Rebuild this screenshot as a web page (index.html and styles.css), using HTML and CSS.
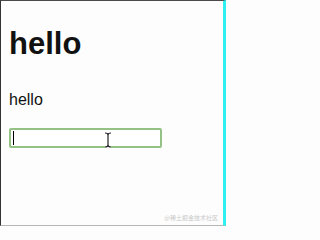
FILE: index.html
```html
<!DOCTYPE html>
<html>
<head>
<meta charset="utf-8">
<link rel="stylesheet" href="styles.css">
</head>
<body>
<div class="frame">
  <h1 class="title">hello</h1>
  <p class="text">hello</p>
  <div class="field">
    <input class="input" type="text">
    <span class="caret"></span>
    <svg class="ibeam" width="8" height="16" viewBox="0 0 8 16">
      <path d="M1 1 Q4 1 4 3 Q4 1 7 1 M4 3 V13 M1 15 Q4 15 4 13 Q4 15 7 15" fill="none" stroke="#fff" stroke-width="3"/>
      <path d="M1 1 Q4 1 4 3 Q4 1 7 1 M4 3 V13 M1 15 Q4 15 4 13 Q4 15 7 15" fill="none" stroke="#222" stroke-width="1.2"/>
    </svg>
  </div>
  <div class="watermark">@稀土掘金技术社区</div>
</div>
</body>
</html>
```
FILE: styles.css
```css
html, body {
  margin: 0;
  padding: 0;
  background: #fdfdfd;
}
.frame {
  position: relative;
  box-sizing: border-box;
  width: 226px;
  height: 226px;
  border-top: 1px solid #4a4a4a;
  border-left: 1px solid #333;
  border-right: 3px solid #2ef0f0;
  border-bottom: 1px solid #b5b5b5;
  padding: 0 0 0 8px;
  font-family: "Liberation Sans", Arial, sans-serif;
  color: #111;
  overflow: hidden;
}
.title {
  margin: 25px 0 0 0;
  font-size: 31px;
  font-weight: bold;
  line-height: 36px;
}
.text {
  margin: 29px 0 0 0;
  font-size: 16px;
  line-height: 18px;
}
.field {
  position: relative;
  margin-top: 19px;
  width: 153px;
}
.input {
  display: block;
  box-sizing: border-box;
  width: 153px;
  height: 20px;
  margin: 0;
  border: 2px solid #94c184;
  border-radius: 2px;
  background: #fff;
  outline: none;
  padding: 0;
}
.caret {
  position: absolute;
  left: 4px;
  top: 3px;
  width: 1px;
  height: 14px;
  background: #000;
}
.ibeam {
  position: absolute;
  left: 95px;
  top: 4px;
}
.watermark {
  position: absolute;
  right: 5px;
  bottom: 3px;
  font-family: "Noto Sans CJK SC", sans-serif;
  font-size: 6px;
  color: #c8c8c8;
}
```
